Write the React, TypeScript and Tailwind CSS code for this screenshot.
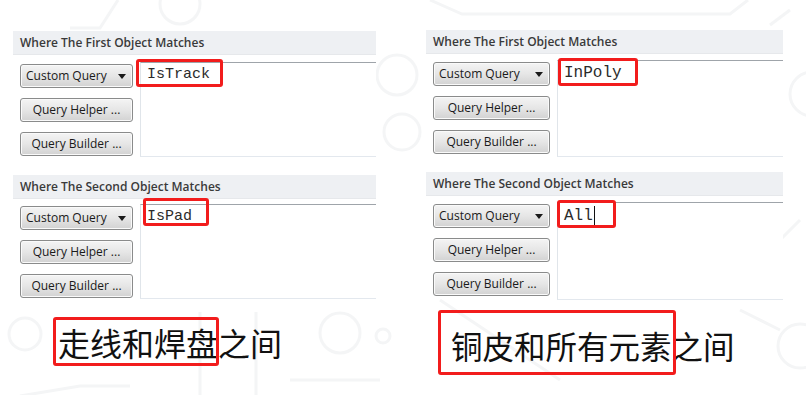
import React from 'react';

type PanelProps = {
  title: string;
  query: string;
  box: { left: number; top: number; width: number; height: number };
  fontSize: string;
  bodyGap: string;
  bodyHeight: string;
  btnCol: string;
  btnWidth: string;
  cursor?: boolean;
};

const btn =
  'h-6 rounded-[3px] border border-[#8a8b8b] bg-gradient-to-b from-[#f4f4f4] via-[#e6e6e6] to-[#d2d2d2] text-[12px] text-[#1a1a1a] shadow-[inset_0_0_0_1px_#fafafa]';

const QueryPanel: React.FC<PanelProps> = ({ title, query, box, fontSize, bodyGap, bodyHeight, btnCol, btnWidth, cursor }) => {
  return (
    <div className="flex flex-col">
      <div className="h-6 flex items-center pl-[7px] bg-[#eef0f3] text-[12px] font-semibold text-[#3a3a3a] border-b border-[#e6e8eb]">
        {title}
      </div>
      <div className={`flex ${bodyGap} ${bodyHeight}`}>
        <div className={`flex flex-col gap-[10px] pl-[7px] pt-[2px] shrink-0 ${btnCol}`}>
          <div className={`${btn} ${btnWidth} flex items-center justify-between pl-[5px] pr-[6px]`}>
            <span>Custom Query</span>
            <svg width="8" height="5" viewBox="0 0 8 5">
              <path d="M0 0 H8 L4 5 Z" fill="#1a1a1a" />
            </svg>
          </div>
          <div className={`${btn} ${btnWidth} flex items-center justify-center`}>Query Helper ...</div>
          <div className={`${btn} ${btnWidth} flex items-center justify-center`}>Query Builder ...</div>
        </div>
        <div className="relative flex-1 bg-white border-t border-t-[#9fa4aa] border-l border-l-[#e0e5ea] border-b border-b-[#e3e8ee]">
          <div
            className={`pl-[6px] pt-[3px] leading-[18px] text-[#2b2b2b] flex items-center ${fontSize}`}
            style={{ fontFamily: '"Liberation Mono", "Courier New", monospace' }}
          >
            <span>{query}</span>
            {cursor && <span className="ml-[1px] w-[1.5px] h-[19px] bg-[#111]" />}
          </div>
          <div
            className="absolute border-[3px] border-[#f21c1c] rounded-[3px]"
            style={{ left: box.left, top: box.top, width: box.width, height: box.height }}
          />
        </div>
      </div>
    </div>
  );
};

const Background: React.FC = () => (
  <svg className="absolute inset-0 pointer-events-none" width="806" height="395" viewBox="0 0 806 395">
    <g fill="none" stroke="#f4f5f6" strokeWidth="3">
      <circle cx="180" cy="4" r="20" />
      <path d="M70 28 L100 28 L118 0" />
      <circle cx="397" cy="75" r="20" />
      <path d="M430 0 L462 14 L730 14 L748 0" />
      <circle cx="812" cy="94" r="22" />
      <circle cx="402" cy="132" r="18" />
      <circle cx="25" cy="334" r="16" />
      <path d="M200 312 L200 395 M256 312 L256 395" />
      <circle cx="340" cy="333" r="20" />
      <circle cx="383" cy="336" r="7" />
      <path d="M290 380 L380 380" />
      <path d="M440 300 L560 380" />
      <circle cx="800" cy="346" r="22" />
      <path d="M740 310 L780 330 M20 396 L80 386 L130 386" />
      <path d="M800 220 L770 250 M790 10 L770 25" />
    </g>
  </svg>
);

const App: React.FC = () => {
  return (
    <div
      className="relative w-[806px] h-[395px] bg-white overflow-hidden"
      style={{ fontFamily: '"Open Sans", "Noto Sans", sans-serif' }}
    >
      <Background />
      <div className="relative flex">
        <div className="flex flex-col w-[363px] ml-[13px] pt-[31px]">
          <QueryPanel
            title="Where The First Object Matches"
            query="IsTrack"
            box={{ left: -5, top: -4, width: 87, height: 28 }}
            fontSize="text-[15px]"
            bodyGap="mt-[7px]"
            bodyHeight="h-[95px]"
            btnCol="w-[127px]"
            btnWidth="w-[113px]"
          />
          <div className="mt-[18px]">
            <QueryPanel
              title="Where The Second Object Matches"
              query="IsPad"
              box={{ left: 2, top: -7, width: 66, height: 28 }}
              fontSize="text-[15px]"
              bodyGap="mt-[5px]"
              bodyHeight="h-[95px]"
              btnCol="w-[127px]"
              btnWidth="w-[113px]"
            />
          </div>
          <div
            className="mt-[23px] ml-[45px] text-[32px] leading-[40px] text-[#111]"
            style={{ fontFamily: '"Noto Sans CJK SC", "Noto Sans", sans-serif' }}
          >
            <span className="relative">
              走线和焊盘
              <span className="absolute -left-[5px] -right-[1px] top-[-2px] bottom-[-1px] border-[3px] border-[#f21c1c] rounded-[3px]" />
            </span>
            之间
          </div>
        </div>
        <div className="flex flex-col w-[357px] ml-[50px] pt-[30px]">
          <QueryPanel
            title="Where The First Object Matches"
            query="InPoly"
            box={{ left: 0, top: -3, width: 80, height: 28 }}
            fontSize="text-[16px]"
            bodyGap="mt-[6px]"
            bodyHeight="h-[97px]"
            btnCol="w-[131px]"
            btnWidth="w-[117px]"
          />
          <div className="mt-[15px]">
            <QueryPanel
              title="Where The Second Object Matches"
              query="All"
              box={{ left: -1, top: -3, width: 59, height: 28 }}
              fontSize="text-[16px]"
              bodyGap="mt-[6px]"
              bodyHeight="h-[98px]"
              btnCol="w-[131px]"
              btnWidth="w-[117px]"
              cursor
            />
          </div>
          <div
            className="mt-[25px] ml-[25px] text-[31.5px] leading-[40px] text-[#111]"
            style={{ fontFamily: '"Noto Sans CJK SC", "Noto Sans", sans-serif' }}
          >
            <span className="relative">
              铜皮和所有元素
              <span className="absolute -left-[13px] -right-[4px] top-[-12px] bottom-[-7px] border-[3px] border-[#f21c1c] rounded-[3px]" />
            </span>
            之间
          </div>
        </div>
      </div>
    </div>
  );
};

export default App;
